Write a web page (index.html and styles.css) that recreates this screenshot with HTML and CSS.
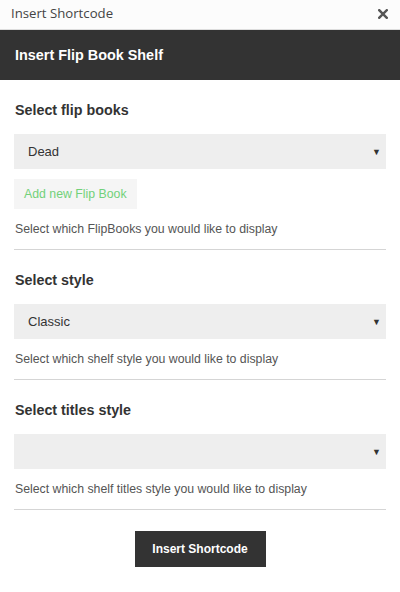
FILE: index.html
```html
<!DOCTYPE html>
<html>
<head>
<meta charset="utf-8">
<link rel="stylesheet" href="styles.css">
</head>
<body>
<div class="modal">
  <div class="titlebar">
    <span class="titlebar-text">Insert Shortcode</span>
    <svg class="close" width="10" height="10" viewBox="0 0 10 10"><path d="M1.2 1.2 L8.8 8.8 M8.8 1.2 L1.2 8.8" stroke="#555" stroke-width="2.4" stroke-linecap="square"/></svg>
  </div>
  <div class="header">Insert Flip Book Shelf</div>
  <div class="content">
    <div class="field">
      <div class="label">Select flip books</div>
      <div class="select"><span>Dead</span><span class="arrow">▼</span></div>
      <div class="addbtn">Add new Flip Book</div>
      <div class="help">Select which FlipBooks you would like to display</div>
    </div>
    <div class="field">
      <div class="label">Select style</div>
      <div class="select"><span>Classic</span><span class="arrow">▼</span></div>
      <div class="help">Select which shelf style you would like to display</div>
    </div>
    <div class="field">
      <div class="label">Select titles style</div>
      <div class="select"><span></span><span class="arrow">▼</span></div>
      <div class="help">Select which shelf titles style you would like to display</div>
    </div>
    <div class="actions">
      <div class="submit">Insert Shortcode</div>
    </div>
  </div>
</div>
</body>
</html>
```
FILE: styles.css
```css
* { box-sizing: border-box; }
html, body { margin: 0; padding: 0; background: #fff; }
body { width: 400px; height: 592px; font-family: "Liberation Sans", Arial, sans-serif; }
.modal { width: 400px; }
.titlebar {
  height: 30px;
  background: #fcfcfc;
  border-bottom: 1px solid #dddddd;
  display: flex;
  align-items: center;
  justify-content: space-between;
  padding: 0 12px 0 11px;
}
.titlebar-text { font-family: "Open Sans", sans-serif; font-size: 13.2px; color: #444; line-height: 1; margin-top: -1px; }
.close { display: block; margin-top: -1px; }
.header {
  height: 50px;
  background: #333333;
  color: #fff;
  font-weight: bold;
  font-size: 14.4px;
  display: flex;
  align-items: center;
  padding: 0 15px;
}
.content { padding: 0 14px; }
.field { border-bottom: 1px solid #d5d5d5; padding-top: 22px; padding-bottom: 11px; }
.label { font-size: 14.3px; font-weight: bold; color: #333; line-height: 16px; height: 16px; margin-left: 1px; }
.select {
  margin-top: 16px;
  height: 35px;
  background: #eeeeee;
  display: flex;
  align-items: center;
  justify-content: space-between;
  padding: 0 5px 0 14px;
  font-size: 13px;
  color: #333;
}
.arrow { font-size: 9px; color: #333; }
.addbtn {
  margin-top: 10px;
  display: inline-block;
  height: 30px;
  line-height: 30px;
  padding: 0 10px;
  background: #f5f5f5;
  color: #72d17a;
  font-size: 12.3px;
}
.help { margin-top: 11px; font-size: 12.3px; color: #555; line-height: 18px; margin-left: 1px; }
.actions { display: flex; justify-content: center; padding-top: 21px; }
.submit {
  width: 131px; height: 36px;
  background: #333;
  color: #fff;
  font-weight: bold;
  font-size: 12px;
  display: flex; align-items: center; justify-content: center;
}
```
